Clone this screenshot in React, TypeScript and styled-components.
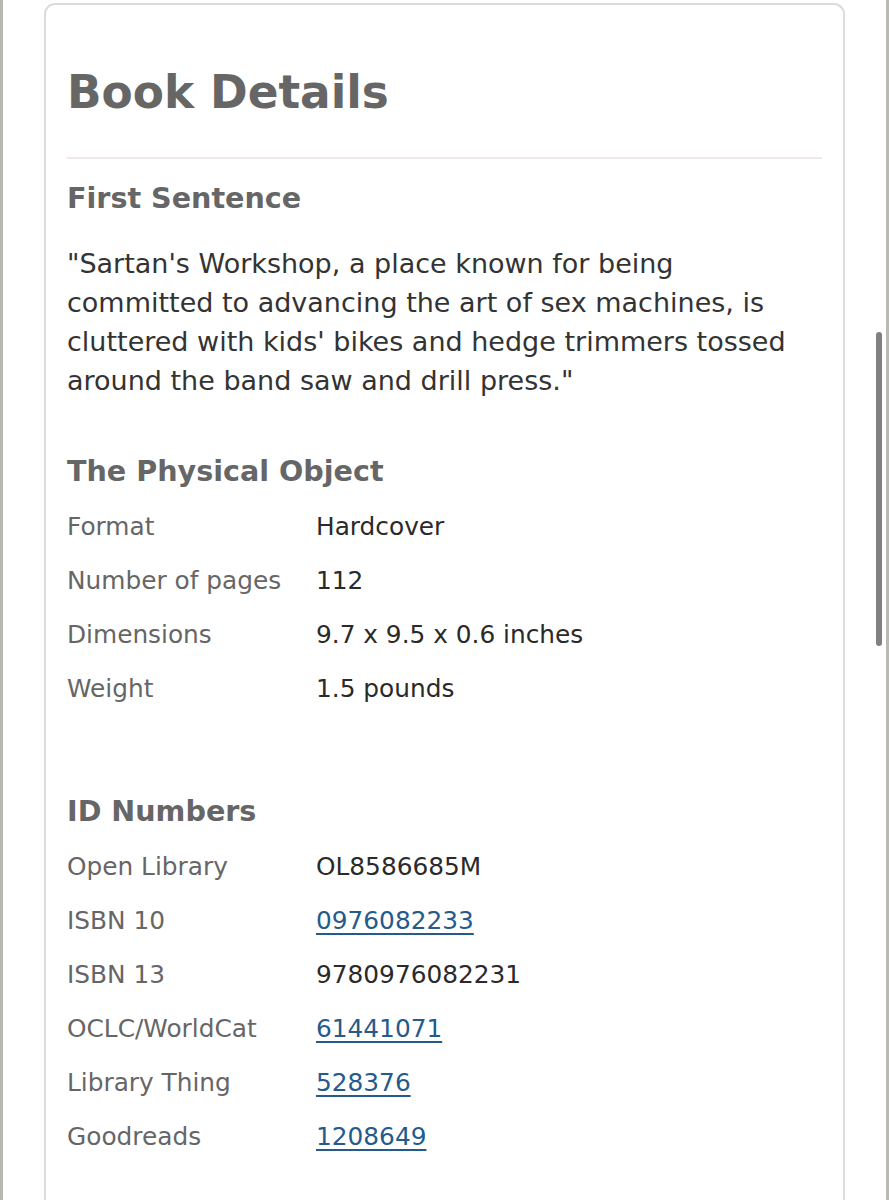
import React from "react";
import styled, { createGlobalStyle } from "styled-components";

const Global = createGlobalStyle`
  html, body { margin: 0; padding: 0; background: #ffffff; }
  body { font-family: "DejaVu Sans", Verdana, sans-serif; }
  * { box-sizing: border-box; }
`;

const Page = styled.div`
  position: relative;
  height: 1200px;
  overflow: hidden;
  border-left: 3px solid #b9b9b1;
  border-right: 3px solid #b9b9b1;
  padding: 3px 41px 0 41px;
`;

const Card = styled.section`
  border: 2px solid #dcdcdc;
  border-bottom: none;
  border-radius: 11px 11px 0 0;
  padding: 61px 21px 0 21px;
  min-height: 1300px;
`;

const Title = styled.h1`
  margin: 0;
  font-size: 45.4px;
  line-height: 54px;
  font-weight: 700;
  color: #666666;
`;

const Divider = styled.hr`
  margin: 37px 0 0 0;
  border: none;
  height: 2px;
  background: #f0e8e6;
`;

const SectionTitle = styled.h2<{ $top: number }>`
  margin: ${(p) => p.$top}px 0 0 0;
  font-size: 28.6px;
  line-height: 36px;
  font-weight: 700;
  color: #666666;
`;

const Sentence = styled.p`
  margin: 28px 0 0 0;
  font-size: 27px;
  line-height: 39px;
  color: #333333;
`;

const Table = styled.div`
  margin-top: 10px;
  display: grid;
  grid-template-columns: 249px 1fr;
  grid-auto-rows: 54px;
  align-items: center;
  font-size: 24.8px;
`;

const Label = styled.div`
  color: #666666;
`;

const Value = styled.div`
  color: #2a2a2a;
`;

const Link = styled.a`
  color: #255a8c;
  text-decoration: underline;
  text-underline-offset: 4px;
  text-decoration-thickness: 2px;
`;

const ScrollThumb = styled.div`
  position: absolute;
  left: 873px;
  top: 332px;
  width: 6px;
  height: 314px;
  border-radius: 3px;
  background: #808080;
`;

type Row = { label: string; value: string; link?: boolean };

const physical: Row[] = [
  { label: "Format", value: "Hardcover" },
  { label: "Number of pages", value: "112" },
  { label: "Dimensions", value: "9.7 x 9.5 x 0.6 inches" },
  { label: "Weight", value: "1.5 pounds" },
];

const ids: Row[] = [
  { label: "Open Library", value: "OL8586685M" },
  { label: "ISBN 10", value: "0976082233", link: true },
  { label: "ISBN 13", value: "9780976082231" },
  { label: "OCLC/WorldCat", value: "61441071", link: true },
  { label: "Library Thing", value: "528376", link: true },
  { label: "Goodreads", value: "1208649", link: true },
];

const Rows = ({ rows }: { rows: Row[] }) => (
  <Table>
    {rows.map((r) => (
      <React.Fragment key={r.label}>
        <Label>{r.label}</Label>
        <Value>{r.link ? <Link href="#">{r.value}</Link> : r.value}</Value>
      </React.Fragment>
    ))}
  </Table>
);

export default function App() {
  return (
    <>
      <Global />
      <Page>
        <Card>
          <Title>Book Details</Title>
          <Divider />
          <SectionTitle $top={21}>First Sentence</SectionTitle>
          <Sentence>
            "Sartan's Workshop, a place known for being committed to advancing
            the art of sex machines, is cluttered with kids' bikes and hedge
            trimmers tossed around the band saw and drill press."
          </Sentence>
          <SectionTitle $top={53}>The Physical Object</SectionTitle>
          <Rows rows={physical} />
          <SectionTitle $top={78}>ID Numbers</SectionTitle>
          <Rows rows={ids} />
        </Card>
        <ScrollThumb />
      </Page>
    </>
  );
}
